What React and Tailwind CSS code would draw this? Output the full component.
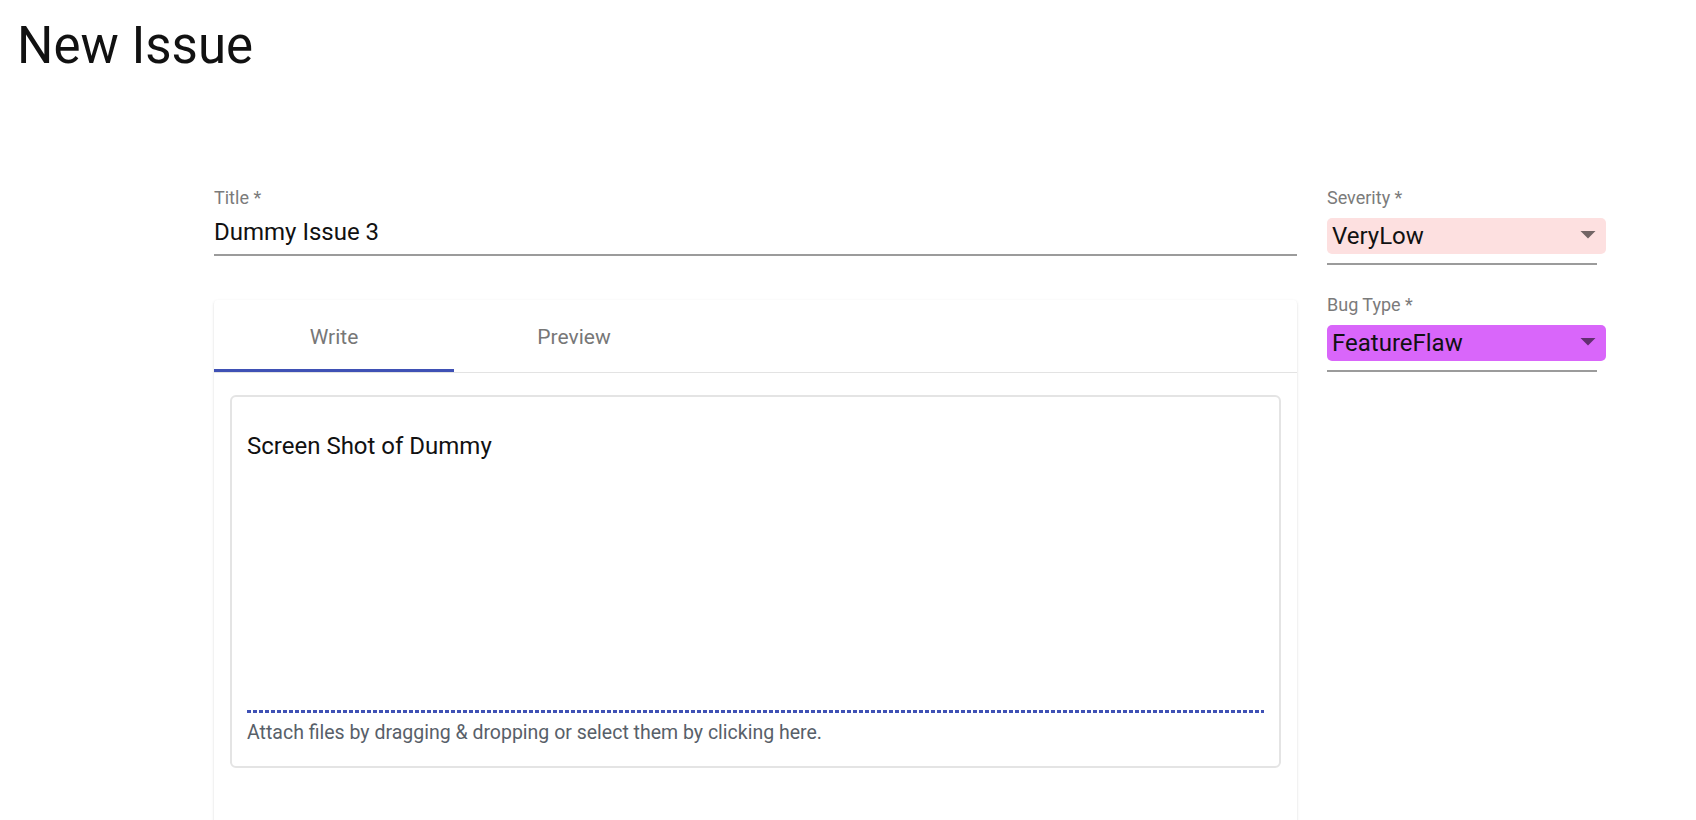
import React from 'react'

function Underline({ className = '' }) {
  return <div className={`h-[2px] bg-[#9b9b9b] ${className}`} />
}

function SelectField({ label, value, bg, className = '' }) {
  return (
    <div className={className}>
      <div className="text-[18px] leading-[18px] text-[#7b7b7b]">{label}</div>
      <div className={`mt-[11px] h-[36px] w-[279px] rounded-[5px] ${bg} flex items-center justify-between pl-[5px]`}>
        <span className="text-[24px] leading-[24px] text-[#111]">{value}</span>
        <svg viewBox="0 0 24 24" className="w-[36px] h-[36px] mb-[4px] fill-black/55">
          <path d="M7 10l5 5 5-5z" />
        </svg>
      </div>
      <Underline className="mt-[9px] w-[270px]" />
    </div>
  )
}

function Tab({ label, active }) {
  return (
    <button
      className={`w-[240px] h-[72px] pt-[4px] flex items-center justify-center border-y-[3px] border-t-transparent text-[21px] font-normal text-[#777] ${
        active ? 'border-b-[#3f51b5]' : 'border-b-transparent'
      }`}
    >
      {label}
    </button>
  )
}

export default function App() {
  return (
    <div className="h-screen overflow-hidden bg-white font-[Roboto,sans-serif] text-[#1b1b1b]">
      <h3 className="pl-[17px] pt-[17px] text-[51px] leading-[58px] font-normal text-[#111]">New Issue</h3>

      <div className="mt-[114px] ml-[214px] flex gap-[30px]">
        {/* main column */}
        <div className="w-[1083px]">
          <div className="text-[18px] leading-[18px] text-[#7b7b7b]">Title *</div>
          <div className="mt-[13px] text-[24px] leading-[24px] text-[#111] pb-[10px]">Dummy Issue 3</div>
          <Underline />

          <div className="mt-[44px] h-[600px] bg-white rounded-[4px] shadow-[0_1px_3px_rgba(0,0,0,0.12),0_1px_1px_rgba(0,0,0,0.1),0_2px_1px_-1px_rgba(0,0,0,0.12)]">
            <div className="flex">
              <Tab label="Write" active />
              <Tab label="Preview" />
            </div>
            <div className="h-px bg-[#e3e3e3]" />

            <div className="mt-[22px] mx-[16px] border-2 border-[#e4e4e4] rounded-[6px] px-[15px]">
              <div className="h-[313px] pt-[37px] text-[24px] leading-[24px] text-[#111]">
                Screen Shot of Dummy
              </div>
              <div className="h-[3px] bg-[repeating-linear-gradient(90deg,#3f51b5_0_4px,transparent_4px_6px)]" />
              <div className="mt-[10px] pb-[23px] text-[19.5px] leading-[20px] text-[#586069]">
                Attach files by dragging &amp; dropping or select them by clicking here.
              </div>
            </div>
          </div>
        </div>

        {/* side column */}
        <div className="w-[279px]">
          <SelectField label="Severity *" value="VeryLow" bg="bg-[#fde0e0]" />
          <SelectField label="Bug Type *" value="FeatureFlaw" bg="bg-[#d966fa]" className="mt-[31px]" />
        </div>
      </div>
    </div>
  )
}
